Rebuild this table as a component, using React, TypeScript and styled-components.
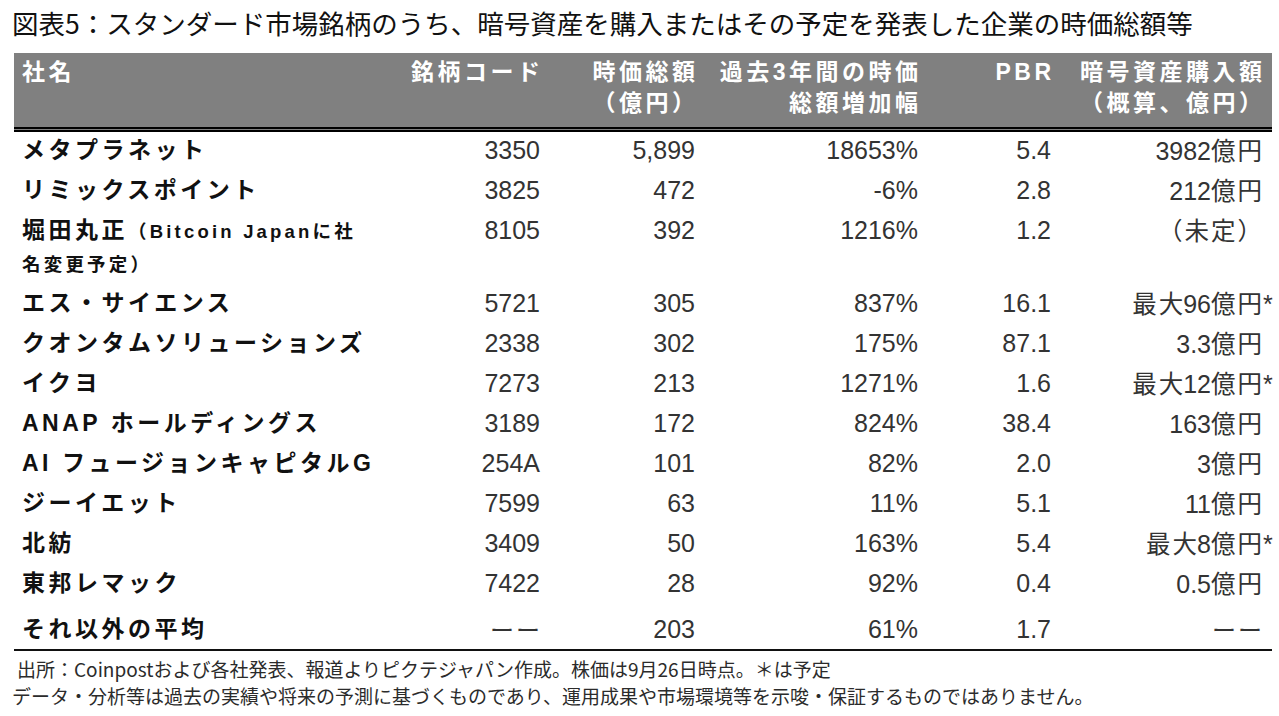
import React from "react";
import styled, { createGlobalStyle } from "styled-components";

const GlobalStyle = createGlobalStyle`
  html, body { margin: 0; padding: 0; background: #ffffff; }
  body { font-family: "Liberation Sans", "Noto Sans CJK JP", sans-serif; color: #1a1a1a; }
`;

const COLS = "386px 140px 155px 223px 133px 211px";

const Page = styled.div`
  width: 1279px;
  height: 716px;
  box-sizing: border-box;
  padding: 6px 7px 0 12px;
  overflow: hidden;
`;

const Title = styled.h1`
  margin: 0;
  font-family: "Noto Sans CJK JP", sans-serif;
  font-weight: 400;
  font-size: 26.5px;
  line-height: 34px;
  color: #111;
  white-space: nowrap;
`;

const Table = styled.div`
  margin: 13px 0 0 2px;
  width: 1258px;
  border-bottom: 2px solid #111;
`;

const HeadRow = styled.div`
  display: grid;
  grid-template-columns: ${COLS};
  background: #808080;
  color: #ffffff;
  padding: 4px 10px 8px 0;
  border-bottom: 5px double #000;
  font-weight: 700;
  font-size: 23px;
  letter-spacing: 3.5px;
`;

const HeadCell = styled.div<{ $left?: boolean }>`
  line-height: 31px;
  height: 31px;
  white-space: nowrap;
  text-align: ${(p) => (p.$left ? "left" : "right")};
  padding-left: ${(p) => (p.$left ? "8px" : "0")};
  margin-right: ${(p) => (p.$left ? "0" : "-3.5px")};
`;

const HeadStack = styled.div`
  display: flex;
  flex-direction: column;
`;

const Body = styled.div`
  display: flex;
  flex-direction: column;
`;

const Row = styled.div<{ $h?: number; $gap?: number }>`
  display: grid;
  grid-template-columns: ${COLS};
  padding-right: 10px;
  height: ${(p) => p.$h ?? 40}px;
  margin-top: ${(p) => p.$gap ?? 0}px;
  align-items: start;
`;

const NameCell = styled.div`
  padding-left: 8px;
  font-weight: 700;
  font-size: 23px;
  letter-spacing: 3.5px;
  line-height: 36px;
  height: 36px;
  color: #111;
  white-space: nowrap;
`;

const WrapName = styled.div`
  padding-left: 8px;
  font-weight: 700;
  font-size: 18.5px;
  letter-spacing: 3.2px;
  color: #111;
  white-space: nowrap;
`;

const WrapLine = styled.div<{ $h: number }>`
  height: ${(p) => p.$h}px;
  line-height: ${(p) => p.$h}px;
`;

const BigPart = styled.span`
  font-size: 23px;
  letter-spacing: 3.5px;
`;

const NumCell = styled.div`
  text-align: right;
  font-size: 25px;
  line-height: 36px;
  height: 36px;
  color: #333;
  white-space: nowrap;
`;

const Unit = styled.span`
  font-family: "Noto Sans CJK JP", sans-serif;
  font-size: 24.5px;
  letter-spacing: 2px;
  margin-right: -2px;
`;

const Star = styled.span`
  display: inline-block;
  width: 0;
  overflow: visible;
  text-indent: 1px;
`;

const Dash = styled.span`
  font-family: "Noto Sans CJK JP", sans-serif;
  font-size: 24px;
  letter-spacing: 2px;
  margin-right: -2px;
`;

const Notes = styled.div`
  margin-top: 4px;
  font-family: "Noto Sans CJK JP", sans-serif;
  font-size: 19px;
  line-height: 27px;
  color: #2b2b2b;
  white-space: nowrap;
`;

const Note = styled.div<{ $indent?: boolean }>`
  padding-left: ${(p) => (p.$indent ? "5px" : "0")};
`;

type R = {
  name: string;
  code: string;
  cap: string;
  growth: string;
  pbr: string;
  amount: React.ReactNode;
};

const amt = (n: string) => (
  <>
    {n}
    <Unit>億円</Unit>
  </>
);

const maxAmt = (n: string) => (
  <>
    <Unit>最大</Unit>
    {n}
    <Unit>億円</Unit>
    <Star>*</Star>
  </>
);

const rows: R[] = [
  { name: "メタプラネット", code: "3350", cap: "5,899", growth: "18653%", pbr: "5.4", amount: amt("3982") },
  { name: "リミックスポイント", code: "3825", cap: "472", growth: "-6%", pbr: "2.8", amount: amt("212") },
  { name: "__HOTTA__", code: "8105", cap: "392", growth: "1216%", pbr: "1.2", amount: <Unit>（未定）</Unit> },
  { name: "エス・サイエンス", code: "5721", cap: "305", growth: "837%", pbr: "16.1", amount: maxAmt("96") },
  { name: "クオンタムソリューションズ", code: "2338", cap: "302", growth: "175%", pbr: "87.1", amount: amt("3.3") },
  { name: "イクヨ", code: "7273", cap: "213", growth: "1271%", pbr: "1.6", amount: maxAmt("12") },
  { name: "ANAP ホールディングス", code: "3189", cap: "172", growth: "824%", pbr: "38.4", amount: amt("163") },
  { name: "AI フュージョンキャピタルG", code: "254A", cap: "101", growth: "82%", pbr: "2.0", amount: amt("3") },
  { name: "ジーイエット", code: "7599", cap: "63", growth: "11%", pbr: "5.1", amount: amt("11") },
  { name: "北紡", code: "3409", cap: "50", growth: "163%", pbr: "5.4", amount: maxAmt("8") },
  { name: "東邦レマック", code: "7422", cap: "28", growth: "92%", pbr: "0.4", amount: amt("0.5") },
];

export default function App() {
  return (
    <>
      <GlobalStyle />
      <Page>
        <Title>図表5：スタンダード市場銘柄のうち、暗号資産を購入またはその予定を発表した企業の時価総額等</Title>
        <Table>
          <HeadRow>
            <HeadCell $left>社名</HeadCell>
            <HeadCell>銘柄コード</HeadCell>
            <HeadStack>
              <HeadCell>時価総額</HeadCell>
              <HeadCell>（億円）</HeadCell>
            </HeadStack>
            <HeadStack>
              <HeadCell>過去3年間の時価</HeadCell>
              <HeadCell>総額増加幅</HeadCell>
            </HeadStack>
            <HeadCell>PBR</HeadCell>
            <HeadStack>
              <HeadCell>暗号資産購入額</HeadCell>
              <HeadCell>（概算、億円）</HeadCell>
            </HeadStack>
          </HeadRow>
          <Body>
            {rows.map((r) => (
              <Row key={r.code} $h={r.name === "__HOTTA__" ? 73 : 40}>
                {r.name === "__HOTTA__" ? (
                  <WrapName>
                    <WrapLine $h={36}>
                      <BigPart>堀田丸正</BigPart>（Bitcoin Japanに社
                    </WrapLine>
                    <WrapLine $h={34}>名変更予定）</WrapLine>
                  </WrapName>
                ) : (
                  <NameCell>{r.name}</NameCell>
                )}
                <NumCell>{r.code}</NumCell>
                <NumCell>{r.cap}</NumCell>
                <NumCell>{r.growth}</NumCell>
                <NumCell>{r.pbr}</NumCell>
                <NumCell>{r.amount}</NumCell>
              </Row>
            ))}
            <Row $h={38} $gap={6}>
              <NameCell>それ以外の平均</NameCell>
              <NumCell><Dash>ーー</Dash></NumCell>
              <NumCell>203</NumCell>
              <NumCell>61%</NumCell>
              <NumCell>1.7</NumCell>
              <NumCell><Dash>ーー</Dash></NumCell>
            </Row>
          </Body>
        </Table>
        <Notes>
          <Note $indent>出所：Coinpostおよび各社発表、報道よりピクテジャパン作成。株価は9月26日時点。＊は予定</Note>
          <Note>データ・分析等は過去の実績や将来の予測に基づくものであり、運用成果や市場環境等を示唆・保証するものではありません。</Note>
        </Notes>
      </Page>
    </>
  );
}
